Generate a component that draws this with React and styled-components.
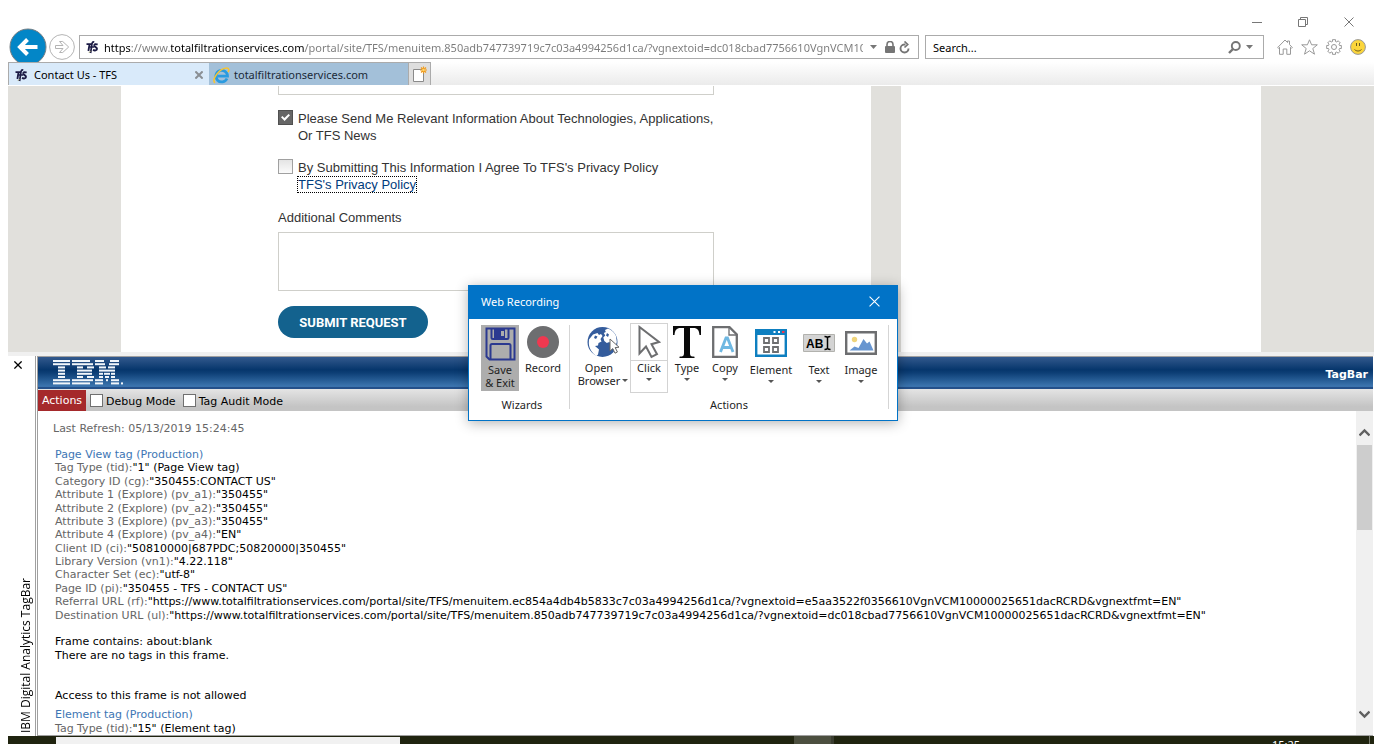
import React from "react";
import styled, { createGlobalStyle, css } from "styled-components";

const ui = '"Noto Sans", "Open Sans", sans-serif';
const verdana = '"DejaVu Sans", sans-serif';
const pageFont = '"Liberation Sans", Arial, sans-serif';

const Global = createGlobalStyle`
  *, *::before, *::after { box-sizing: border-box; }
  body { margin: 0; background: #fff; color: #000; font: 11px/16px ${ui}; }
  button, input, textarea { font: inherit; color: inherit; margin: 0; }
  svg { display: block; flex: none; }
`;

const Screen = styled.div`
  position: relative;
  display: flex;
  flex-direction: column;
  height: 100vh;
  overflow: hidden;
`;

const bareButton = css`
  display: flex;
  align-items: center;
  justify-content: center;
  padding: 0;
  border: 0;
  background: none;
`;

/* ---------- browser chrome ---------- */

const WindowControls = styled.div`
  display: flex;
  justify-content: flex-end;
  gap: 24px;
  height: 35px;
  padding: 12px 22px 0 0;
`;

const ControlButton = styled.button`
  ${bareButton}
  width: 22px;
  height: 20px;
`;

const AddressRow = styled.div`
  display: flex;
  align-items: center;
  height: 24px;
  padding: 0 16px 0 8px;
`;

const BackButton = styled.button`
  ${bareButton}
  width: 40px;
  height: 24px;
  overflow: visible;
`;

const ForwardButton = styled.button`
  ${bareButton}
  width: 28px;
  margin-right: 3px;
`;

const AddressBox = styled.div`
  display: flex;
  align-items: center;
  flex: 828 1 0;
  min-width: 0;
  height: 24px;
  padding: 0 5px;
  border: 1px solid #ababab;
  background: #fff;
`;

const SearchBox = styled(AddressBox)`
  flex: 322 1 0;
  margin-left: 6px;
  padding: 0 8px 0 7px;
`;

const UrlInput = styled.input`
  flex: 1;
  min-width: 0;
  height: 20px;
  margin: 0 0 0 5px;
  padding: 0;
  border: 0;
  outline: 0;
  color: #7a7a7a;
  -webkit-text-fill-color: transparent;
  background: linear-gradient(
    90deg,
    #000 0 27px,
    #7a7a7a 27px 67px,
    #000 67px 201px,
    #7a7a7a 201px
  );
  background-clip: text;
`;

const SearchInput = styled.input`
  flex: 1;
  min-width: 0;
  height: 20px;
  padding: 0;
  border: 0;
  outline: 0;
  background: none;
  &::placeholder { color: #000; opacity: 1; }
`;

const SmallButton = styled.button`
  ${bareButton}
  width: ${(p) => p.$w || 16}px;
  height: 20px;
`;

const Toolbar = styled.div`
  display: flex;
  gap: 8px;
  margin-left: 13px;
`;

const TabStrip = styled.div`
  display: flex;
  height: 24px;
  margin: 3px 8px 0;
  padding-bottom: 1px;
  background: linear-gradient(#fff, #ebebeb) top / 100% 23px no-repeat;
`;

const Tab = styled.div`
  display: flex;
  align-items: center;
  gap: ${(p) => (p.$active ? 6 : 4)}px;
  width: ${(p) => (p.$active ? 201 : 199)}px;
  padding: 2px 5px 0 ${(p) => (p.$active ? 5 : 4)}px;
  border: solid #ababab;
  border-width: 1px 0 0 ${(p) => (p.$active ? 1 : 0)}px;
  background: ${(p) => (p.$active ? "#d9eafa" : "#a3c0d9")};
  color: ${(p) => (p.$active ? "#000" : "#1b2a38")};
`;

const TabTitle = styled.span`
  flex: 1;
  white-space: nowrap;
`;

const NewTab = styled.button`
  ${bareButton}
  width: 23px;
  border: 1px solid #ababab;
  border-bottom: 0;
  background: #dedede;
`;

/* ---------- web page ---------- */

const PageView = styled.main`
  display: flex;
  justify-content: center;
  gap: 30px;
  flex: none;
  height: 266px;
  margin: 0 8px;
  overflow: hidden;
  background: #e1e0dc;
`;

const Column = styled.section`
  width: ${(p) => p.$w}px;
  background: #fff;
`;

const Form = styled.form`
  display: flex;
  flex-direction: column;
  align-items: flex-start;
  width: 436px;
  margin-left: 157px;
  color: #333;
  font: 13px/17px ${pageFont};
`;

const TextField = styled.input`
  width: 100%;
  height: 9px;
  padding: 0;
  border: 1px solid #cfcfca;
  border-top: 0;
  background: #fff;
`;

const CheckRow = styled.div`
  display: flex;
  gap: 5px;
  margin-top: 15px;
`;

const FormCheck = styled.input`
  appearance: none;
  flex: none;
  width: 15px;
  height: 15px;
  border: 1px solid #a0a0a0;
  background: linear-gradient(#e4e4e4, #fbfbfb);
  &:checked {
    border-color: #505050;
    background: #666;
  }
  &:checked::after {
    content: "";
    display: block;
    width: 9px;
    height: 7px;
    margin: 3px 2px;
    background: #fff;
    clip-path: polygon(0 45%, 16% 28%, 38% 58%, 84% 0, 100% 18%, 40% 100%);
  }
`;

const CheckText = styled.div`
  display: flex;
  flex-direction: column;
  align-items: flex-start;
`;

const PolicyLink = styled.a`
  margin-left: -1px;
  padding: 0 1px;
  color: #003b7c;
  text-decoration: none;
  outline: 1px dotted #000;
  outline-offset: -1px;
`;

const FieldLabel = styled.label`
  margin-top: 16px;
`;

const Comments = styled.textarea`
  width: 100%;
  height: 59px;
  margin-top: 6px;
  border: 1px solid #cfcfca;
  resize: none;
`;

const Submit = styled.button`
  height: 32px;
  width: 150px;
  margin-top: 15px;
  border: 0;
  border-radius: 16px;
  background: #13628e;
  color: #fff;
  font: 700 13px/32px Roboto, sans-serif;
`;

/* ---------- tag bar ---------- */

const TagBar = styled.section`
  display: flex;
  flex: 1;
  min-height: 0;
  margin: 0 8px;
  border-top: 4px solid #f0f0f0;
`;

const SideRail = styled.aside`
  display: flex;
  flex-direction: column;
  align-items: center;
  justify-content: space-between;
  width: 28px;
  padding: 4px 0 3px;
  border-right: 1px solid #a0a0a0;
`;

const RailClose = styled.button`
  ${bareButton}
  align-self: flex-start;
  width: 20px;
  height: 10px;
`;

const RailTitle = styled.h2`
  margin: 0 -8px 0 0;
  font: 12px/14px "Open Sans", sans-serif;
  white-space: nowrap;
  writing-mode: vertical-rl;
  transform: rotate(180deg);
`;

const TagMain = styled.div`
  display: flex;
  flex: 1;
  flex-direction: column;
  min-width: 0;
  margin: 0 1px;
  border: solid #a0a0a0;
  border-width: 1px 0 1px 1px;
`;

const TagHeader = styled.header`
  display: flex;
  justify-content: space-between;
  flex: none;
  height: 32px;
  padding: 3px 5px 0 15px;
  background: linear-gradient(#33598d, #06366c 40%, #0d3f76 50%, #3d76b0 92%, #24508a 94%);
  color: #fff;
  font: 700 11px/29px ${verdana};
`;

const TagTools = styled.div`
  display: flex;
  align-items: center;
  flex: none;
  height: 22px;
  background: linear-gradient(#e4e4e4, #c4c4c4 80%);
  font: 11px/14px ${verdana};
`;

const ActionsButton = styled.button`
  align-self: stretch;
  width: 48px;
  margin-top: 1px;
  padding: 0;
  border: 0;
  background: #a5292b;
  color: #fff;
`;

const ToolCheck = styled.label`
  display: flex;
  align-items: center;
  gap: 3px;
  margin: 4px 0 0 4px;
  & + & { margin-left: 7px; }
  input {
    appearance: none;
    width: 13px;
    height: 13px;
    margin-bottom: 3px;
    border: 1px solid #707070;
    background: #fff;
  }
`;

const LogArea = styled.div`
  display: flex;
  flex: 1;
  min-height: 0;
`;

const Log = styled.div`
  flex: 1;
  min-width: 0;
  padding: 11px 0 0 17px;
  overflow: hidden;
  font: 11px/13px ${verdana};
  white-space: nowrap;
`;

const Refresh = styled.p`
  margin: 0 0 13px -2px;
  color: #666;
`;

const TagLink = styled.a`
  color: #3d76b4;
  text-decoration: none;
`;

const TagList = styled.div`
  display: grid;
  grid-auto-rows: 1fr;
  min-height: ${(p) => p.$h}px;
  margin-bottom: ${(p) => p.$after || 0}px;
`;

const Name = styled.span`
  color: #666;
`;

const ScrollTrack = styled.div`
  display: flex;
  flex-direction: column;
  justify-content: space-between;
  flex: none;
  width: 17px;
  padding: 11px 0;
  background: #f0f0f0;
`;

const Thumb = styled.div`
  height: 85px;
  margin: 3px 1px auto;
  background: #cdcdcd;
`;

const Taskbar = styled.footer`
  display: flex;
  flex: none;
  height: 8px;
  margin: 0 8px;
  overflow: hidden;
  background: #20240f;
`;

const TaskSearch = styled.div`
  width: 344px;
  margin: 1px 0 0 48px;
  background: #f1f1f1;
`;

const TaskItem = styled.div`
  width: 40px;
  margin-left: 394px;
  border-right: 3px solid #3a3d30;
  background: #4c4f3f;
`;

const Clock = styled.time`
  margin-left: auto;
  padding: 2px 69px 0 0;
  border-right: 1px solid #777a6c;
  margin-right: 4px;
  color: #fff;
  font: 11px/14px ${ui};
`;

/* ---------- recorder window ---------- */

const Recorder = styled.div`
  position: absolute;
  top: 285px;
  left: calc(50% - 223px);
  width: 430px;
  border: 1px solid #0173c7;
  background: #fff;
  box-shadow: 0 2px 12px rgba(0, 0, 0, 0.3);
  color: #1e1e1e;
  font: 11px/13px ${ui};
`;

const RecorderTitle = styled.header`
  display: flex;
  align-items: center;
  justify-content: space-between;
  height: 33px;
  padding: 0 17px 2px 12px;
  background: #0173c7;
  color: #fff;
`;

const Ribbon = styled.div`
  display: flex;
  padding: 4px 0 9px 12px;
`;

const Group = styled.div`
  display: flex;
  flex: none;
  flex-direction: column;
  align-items: center;
  gap: 5px;
`;

const GroupTools = styled.div`
  display: flex;
  height: 70px;
`;

const Divider = styled.div`
  flex: none;
  width: 1px;
  margin: 2px 6px 2px 6px;
  background: #d5d5d5;
`;

const Tool = styled.button`
  display: flex;
  flex: none;
  flex-direction: column;
  align-items: center;
  width: ${(p) => p.$w}px;
  padding: 0;
  border: 0;
  background: none;
  ${(p) => p.$pressed && css`
    height: 66px;
    margin: 2px 4px 0 0;
    background: #adadad;
  `}
  ${(p) => p.$framed && css`
    outline: 1px solid #d3d3d3;
    outline-offset: -1px;
    background: linear-gradient(#d3d3d3, #d3d3d3) 0 37px / 100% 1px no-repeat;
  `}
`;

const IconSlot = styled.span`
  display: flex;
  align-items: center;
  justify-content: center;
  height: ${(p) => p.$h}px;
`;

const ToolLabel = styled.span`
  display: flex;
  align-items: flex-end;
  white-space: pre-line;
`;

const Caret = styled.span`
  width: 0;
  margin: ${(p) => (p.$inline ? "0 0 5px 2px" : "4px 0 0")};
  border: solid transparent;
  border-width: 3px 3px 0;
  border-top-color: #555;
`;

/* ---------- icons ---------- */

const CrossIcon = ({ size = 10, color = "#666", w = 1 }) => (
  <svg width={size} height={size} viewBox="0 0 10 10" stroke={color} strokeWidth={w} aria-hidden="true">
    <path d="M0.5 0.5l9 9M9.5 0.5l-9 9" />
  </svg>
);

const TfsIcon = () => (
  <svg width="14" height="14" viewBox="0 0 14 14" fill="none" stroke="#1c1b45" aria-hidden="true">
    <path d="M1.500 4.200h5.500M4.600 4L3.400 11" strokeWidth="1.800" />
    <path d="M9.200 2.200C7.600 1.300 7 3 6.800 5L5.600 13M5 7h4" strokeWidth="1.700" />
    <path d="M12.600 4.600c-1.800-1-3.600-.3-3.300 1.200.3 1.300 2.900 1.500 2.700 3.200-.2 1.600-2.300 1.800-4 .9" strokeWidth="1.900" />
    <path d="M4 12.800l2-2" stroke="#8a8a5a" />
  </svg>
);

const BackIcon = () => (
  <svg width="38" height="38" viewBox="0 0 38 38" aria-hidden="true">
    <circle cx="19" cy="19" r="18" fill="#0386c7" stroke="#767d82" />
    <path d="M28.500 19H12M18.500 11.500L11 19l7.500 7.500" fill="none" stroke="#fff" strokeWidth="4" />
  </svg>
);

const ForwardIcon = () => (
  <svg width="26" height="26" viewBox="0 0 26 26" fill="none" stroke="#b4b4b4" aria-hidden="true">
    <circle cx="13" cy="13" r="12.400" fill="#fff" />
    <path d="M6.500 11.500h7.500l-3.500-4h3.200l6 5.500-6 5.500h-3.200l3.500-4h-7.500z" />
  </svg>
);

const EdgeIcon = () => (
  <svg width="17" height="17" viewBox="0 0 17 17" fill="none" aria-hidden="true">
    <path d="M14 11.500A5.800 5.800 0 1 1 14.500 9.200H4.500" stroke="#2a9be0" strokeWidth="2.800" />
    <path d="M2 15.800C-1.500 13 5.500 1.800 13.500 1c3-.1 2.600 2.500 1.500 4" stroke="#f6c433" strokeWidth="1.600" />
  </svg>
);

const DropIcon = () => (
  <svg width="7" height="4" viewBox="0 0 7 4" fill="#777" aria-hidden="true"><path d="M0 0h7L3.500 4z" /></svg>
);

const LockIcon = () => (
  <svg width="10" height="12" viewBox="0 0 10 12" aria-hidden="true">
    <path d="M2 6V3.500a3 3 0 0 1 6 0V6" fill="none" stroke="#757575" strokeWidth="1.600" />
    <rect y="5" width="10" height="7" rx="1" fill="#757575" />
  </svg>
);

const ReloadIcon = () => (
  <svg width="12" height="13" viewBox="0 0 12 13" fill="none" stroke="#757575" aria-hidden="true">
    <path d="M6.500 3.500H5.300a4 4 0 1 0 4.200 4" strokeWidth="1.900" />
    <path d="M5.500.5l3.200 3-3.200 3" strokeWidth="1.700" />
  </svg>
);

const SearchIcon = () => (
  <svg width="13" height="13" viewBox="0 0 13 13" fill="none" stroke="#757575" aria-hidden="true">
    <circle cx="7.800" cy="5" r="4" strokeWidth="1.900" />
    <path d="M5 8L1 12" strokeWidth="2.400" />
  </svg>
);

const HomeIcon = () => (
  <svg width="16" height="16" viewBox="0 0 16 16" fill="none" stroke="#999" aria-hidden="true">
    <path d="M.7 8.500L8 1l2.500 2.500V2h2v3.500L15.300 8.500l-.8.8-1-1v7H9.800V10H6.200v5.300H2.500v-7l-1 1z" />
  </svg>
);

const StarIcon = () => (
  <svg width="17" height="16" viewBox="0 0 17 16" fill="none" stroke="#999" aria-hidden="true">
    <path d="M8.500.8l2.100 5h5.700l-4.500 3.700 1.700 5.700-5-3.400-5 3.400 1.700-5.700L.7 5.800h5.700z" />
  </svg>
);

const GearIcon = () => {
  const teeth = Array.from({ length: 8 }, (_, i) => {
    const at = (r, off) => {
      const a = ((i * 45 + off) * Math.PI) / 180;
      return `${(8 + r * Math.cos(a)).toFixed(2)} ${(8 + r * Math.sin(a)).toFixed(2)}`;
    };
    return `${at(5.7, -15)} L${at(7.5, -12)} L${at(7.5, 12)} L${at(5.7, 15)}`;
  });
  return (
    <svg width="16" height="16" viewBox="0 0 16 16" fill="none" stroke="#999" aria-hidden="true">
      <path d={`M${teeth.join(" L")}z`} />
      <circle cx="8" cy="8" r="2.500" />
    </svg>
  );
};

const SmileIcon = () => (
  <svg width="16" height="16" viewBox="0 0 16 16" aria-hidden="true">
    <circle cx="8" cy="8" r="7.400" fill="#fbd53b" stroke="#999" />
    <path d="M6.500 4v3M9.500 4v3M4.500 10.500c2 2 5 2 7 0" fill="none" stroke="#6d5c1c" />
  </svg>
);

const NewTabIcon = () => (
  <svg width="14" height="17" viewBox="0 0 14 17" aria-hidden="true">
    <path d="M.5 3.500h10v12H.5z" fill="#fff" stroke="#8a8a8a" />
    <path d="M10.500.5v7M7 4h7M8 1.500l5 5M13 1.500l-5 5" stroke="#f09a1c" strokeWidth="1.200" />
    <circle cx="10.500" cy="4" r="1.300" fill="#ffd76b" />
  </svg>
);

const IBM_BARS = [
  [[0, 17], [19, 37], [42, 51], [57, 66]],
  [[0, 17], [19, 40], [42, 52], [56, 66]],
  [[5, 12], [24, 30], [34, 41], [46, 53], [55, 62]],
  [[5, 12], [24, 39], [46, 62]],
  [[5, 12], [24, 39], [46, 50], [51, 57], [58, 62]],
  [[5, 12], [24, 30], [34, 41], [46, 50], [52, 56], [58, 62]],
  [[0, 17], [19, 40], [42, 50], [53, 55], [58, 66]],
  [[0, 17], [19, 37], [42, 50], [58, 66], [68, 70]],
];

const IbmLogo = () => (
  <svg width="70" height="25" viewBox="0 0 70 25" fill="#f2f6fa" role="img" aria-label="IBM">
    {IBM_BARS.map((row, y) =>
      row.map(([a, b]) => (
        <rect key={`${y}-${a}`} x={a} y={y * 3.2} width={b - a} height="2" />
      ))
    )}
  </svg>
);

const Chevron = ({ up }) => (
  <svg width="11" height="9" viewBox="0 0 11 9" fill="none" stroke="#606060" strokeWidth="2.400" aria-hidden="true">
    <path d={up ? "M0.500 7.500l5-5 5 5" : "M0.500 1.500l5 5 5-5"} />
  </svg>
);

const SaveIcon = () => (
  <svg width="31" height="34" viewBox="0 0 31 34" fill="none" stroke="#2b3990" strokeWidth="2" aria-hidden="true">
    <path d="M1.500 1.500h28v31h-25l-3-3z" />
    <path d="M6.500 2v8.500q0 1.500 1.500 1.500h14q1.500 0 1.500-1.500V2M5.500 32V18.500q0-1.500 1.500-1.500h17q1.500 0 1.500 1.500V32" />
    <path d="M9 2h11v9H9z" fill="#2b3990" stroke="none" />
    <path d="M16 4h3v5h-3z" fill="#adadad" stroke="none" />
  </svg>
);

const RecordIcon = () => (
  <svg width="32" height="32" viewBox="0 0 32 32" aria-hidden="true">
    <circle cx="16" cy="16" r="16" fill="#6d6e70" />
    <circle cx="16" cy="16" r="6" fill="#ef3850" />
  </svg>
);

const GlobeIcon = () => (
  <svg width="33" height="32" viewBox="0 0 33 32" aria-hidden="true">
    <circle cx="15.500" cy="16" r="15" fill="#345c9c" />
    <path d="M2 13.500l4-5 4.500-1.500 1.500 2 2-1 1.500 2-2 3 1 2.500-3 1.500-.5 2.500-3 .5 4 3.500-1 5-1.500 1.500C5.500 27.500 2 23 1.800 17z" fill="#fff" />
    <path d="M18 4l3-1.500c3.500 1.500 6.500 4 8 7.500l.8 6-2 6-5.500-6-2.500 1-2.500-2-1-3.500 2-2-1.500-2.500 2-1z" fill="#fff" />
    <path d="M8 9.500l2.500 1-1.500 2.500-2-1zM20 7l2 1.500-1 2.500-2-1.500z" fill="#345c9c" />
    <path d="M23 13v12l2.800-2.400 2.200 4.600 2.400-1.200-2.200-4.400 3.800-.4z" fill="#fff" stroke="#666" />
  </svg>
);

const PointerIcon = () => (
  <svg width="24" height="34" viewBox="0 0 24 34" fill="#fff" stroke="#6d6e70" strokeWidth="2" aria-hidden="true">
    <path d="M2.500 2v26.500l6.500-7 5.500 10.500 5.500-2.800-5.500-10L22 17z" />
  </svg>
);

const TypeIcon = () => (
  <svg width="28" height="32" viewBox="0 0 28 32" fill="#0a0a0a" aria-hidden="true">
    <path d="M0 0h28v9h-1.500C26 4 24.500 2 20.500 2H17v25c0 3 1 3.500 4.500 3.700V32h-15v-1.300C10 30.500 11 30 11 27V2H7.500C3.500 2 2 4 1.500 9H0z" />
  </svg>
);

const CopyIcon = () => (
  <svg width="26" height="32" viewBox="0 0 26 32" fill="none" aria-hidden="true">
    <path d="M1.200 1.200h16.300l7.300 7.300v22.300H1.200z" stroke="#6d6e70" strokeWidth="2.300" />
    <path d="M17 1.500v7.500h7.500" stroke="#6d6e70" strokeWidth="1.300" />
    <path d="M8.500 26l5.500-14h1.500L21 26M10.500 21.500h8.500" stroke="#6fb8e2" strokeWidth="2.800" />
  </svg>
);

const ElementIcon = () => (
  <svg width="32" height="28" viewBox="0 0 32 28" fill="none" aria-hidden="true">
    <path d="M1.200 1.200h29.600v25.600H1.200z" fill="#fff" stroke="#0e7fc0" strokeWidth="2.400" />
    <path d="M0 0h32v6H0z" fill="#0e7fc0" />
    <path d="M18.500 3h2M23 3h2" stroke="#fff" strokeWidth="2" />
    <path d="M27 3h2.500" stroke="#ef3850" strokeWidth="2" />
    <path d="M9 9h5v5H9zM18 9h5v5h-5zM9 18h5v5H9zM18 18h5v5h-5z" stroke="#6d6e70" strokeWidth="1.800" />
  </svg>
);

const TextIcon = () => (
  <svg width="32" height="18" viewBox="0 0 32 18" aria-hidden="true">
    <path d="M.5.500h31v17H.5z" fill="#d4d4d4" stroke="#b2b2ae" />
    <text x="3" y="14" fontFamily="Liberation Sans, sans-serif" fontWeight="700" fontSize="12">AB</text>
    <path d="M21.500 2.500q2 0 3 1 1-1 3-1M21.500 15.500q2 0 3-1 1 1 3 1M24.500 3.500v11" fill="none" stroke="#000" strokeWidth="1.500" />
  </svg>
);

const ImageIcon = () => (
  <svg width="32" height="24" viewBox="0 0 32 24" aria-hidden="true">
    <path d="M1.200 1.200h29.600v21.600H1.200z" fill="#fff" stroke="#6d6e70" strokeWidth="2.400" />
    <circle cx="9.500" cy="8.500" r="2.700" fill="#efd47c" />
    <path d="M4.500 19.500l5-4 4 1.500L18.500 8l3.500 4.500 2.500-2 4 9z" fill="#6795d0" />
  </svg>
);

/* ---------- data ---------- */

const HOST = "https://www.totalfiltrationservices.com/portal/site/TFS/menuitem.";
const OID = "VgnVCM10000025651dacRCRD&vgnextfmt=EN";
const CONTACT_URL = `${HOST}850adb747739719c7c03a4994256d1ca/?vgnextoid=dc018cbad7756610${OID}`;
const REFERRAL_URL = `${HOST}ec854a4db4b5833c7c03a4994256d1ca/?vgnextoid=e5aa3522f0356610${OID}`;

const PAGE_VIEW = [
  ["Tag Type (tid):", '"1" (Page View tag)'],
  ["Category ID (cg):", '"350455:CONTACT US"'],
  ["Attribute 1 (Explore) (pv_a1):", '"350455"'],
  ["Attribute 2 (Explore) (pv_a2):", '"350455"'],
  ["Attribute 3 (Explore) (pv_a3):", '"350455"'],
  ["Attribute 4 (Explore) (pv_a4):", '"EN"'],
  ["Client ID (ci):", '"50810000|687PDC;50820000|350455"'],
  ["Library Version (vn1):", '"4.22.118"'],
  ["Character Set (ec):", '"utf-8"'],
  ["Page ID (pi):", '"350455 - TFS - CONTACT US"'],
  ["Referral URL (rf):", `"${REFERRAL_URL}"`],
  ["Destination URL (ul):", `"${CONTACT_URL}"`],
];

const ACTIONS = [
  { label: "Open\nBrowser", icon: <GlobeIcon />, w: 54, slot: 38, inline: true },
  { label: "Click", icon: <PointerIcon />, w: 38, slot: 38, framed: true },
  { label: "Type", icon: <TypeIcon />, w: 38, slot: 38 },
  { label: "Copy", icon: <CopyIcon />, w: 38, slot: 38 },
  { label: "Element", icon: <ElementIcon />, w: 54, slot: 40 },
  { label: "Text", icon: <TextIcon />, w: 42, slot: 40 },
  { label: "Image", icon: <ImageIcon />, w: 42, slot: 40 },
];

export default function App() {
  return (
    <Screen>
      <Global />
      <WindowControls>
        <ControlButton aria-label="Minimize">
          <svg width="10" height="1" viewBox="0 0 10 1" fill="#777"><path d="M0 0h10v1H0z" /></svg>
        </ControlButton>
        <ControlButton aria-label="Restore">
          <svg width="10" height="10" viewBox="0 0 10 10" fill="none" stroke="#777"><path d="M.5 2.500h7v7h-7zM2.500 2.500v-2h7v7h-2" /></svg>
        </ControlButton>
        <ControlButton aria-label="Close"><CrossIcon color="#777" /></ControlButton>
      </WindowControls>

      <AddressRow>
        <BackButton aria-label="Back"><BackIcon /></BackButton>
        <ForwardButton aria-label="Forward"><ForwardIcon /></ForwardButton>
        <AddressBox>
          <TfsIcon />
          <UrlInput aria-label="Address" defaultValue={CONTACT_URL} />
          <SmallButton $w={20} aria-label="Show addresses"><DropIcon /></SmallButton>
          <SmallButton $w={14} aria-label="Security report"><LockIcon /></SmallButton>
          <SmallButton $w={16} aria-label="Refresh"><ReloadIcon /></SmallButton>
        </AddressBox>
        <SearchBox>
          <SearchInput aria-label="Search" placeholder="Search..." />
          <SmallButton $w={18} aria-label="Search"><SearchIcon /></SmallButton>
          <SmallButton $w={12} aria-label="Search options"><DropIcon /></SmallButton>
        </SearchBox>
        <Toolbar>
          <SmallButton aria-label="Home"><HomeIcon /></SmallButton>
          <SmallButton $w={17} aria-label="Favorites"><StarIcon /></SmallButton>
          <SmallButton aria-label="Tools"><GearIcon /></SmallButton>
          <SmallButton aria-label="Feedback"><SmileIcon /></SmallButton>
        </Toolbar>
      </AddressRow>

      <TabStrip>
        <Tab $active>
          <TfsIcon />
          <TabTitle>Contact Us - TFS</TabTitle>
          <SmallButton $w={10} aria-label="Close tab"><CrossIcon size={8} color="#8a8f94" w={2.5} /></SmallButton>
        </Tab>
        <Tab>
          <EdgeIcon />
          <TabTitle>totalfiltrationservices.com</TabTitle>
        </Tab>
        <NewTab aria-label="New tab"><NewTabIcon /></NewTab>
      </TabStrip>

      <PageView>
        <Column $w={750}>
          <Form onSubmit={(e) => e.preventDefault()}>
            <TextField aria-label="Phone" />
            <CheckRow>
              <FormCheck type="checkbox" id="news" defaultChecked />
              <label htmlFor="news">
                Please Send Me Relevant Information About Technologies, Applications,
                <br />
                Or TFS News
              </label>
            </CheckRow>
            <CheckRow>
              <FormCheck type="checkbox" id="agree" />
              <CheckText>
                <label htmlFor="agree">By Submitting This Information I Agree To TFS's Privacy Policy</label>
                <PolicyLink href="#privacy">TFS's Privacy Policy</PolicyLink>
              </CheckText>
            </CheckRow>
            <FieldLabel htmlFor="comments">Additional Comments</FieldLabel>
            <Comments id="comments" />
            <Submit>SUBMIT REQUEST</Submit>
          </Form>
        </Column>
        <Column $w={360} />
      </PageView>

      <TagBar>
        <SideRail>
          <RailClose aria-label="Close tag bar"><CrossIcon size={8} color="#000" w={1.6} /></RailClose>
          <RailTitle>IBM Digital Analytics TagBar</RailTitle>
        </SideRail>
        <TagMain>
          <TagHeader>
            <IbmLogo />
            TagBar
          </TagHeader>
          <TagTools>
            <ActionsButton>Actions</ActionsButton>
            <ToolCheck><input type="checkbox" />Debug Mode</ToolCheck>
            <ToolCheck><input type="checkbox" />Tag Audit Mode</ToolCheck>
          </TagTools>
          <LogArea>
            <Log>
              <Refresh>Last Refresh: 05/13/2019 15:24:45</Refresh>
              <TagList $h={174} $after={13}>
                <TagLink href="#page-view">Page View tag (Production)</TagLink>
                {PAGE_VIEW.map(([name, value]) => (
                  <div key={name}><Name>{name}</Name>{value}</div>
                ))}
              </TagList>
              <TagList $h={27} $after={27}>
                <div>Frame contains: about:blank</div>
                <div>There are no tags in this frame.</div>
              </TagList>
              <TagList $h={13} $after={6}>
                <div>Access to this frame is not allowed</div>
              </TagList>
              <TagList $h={27}>
                <TagLink href="#element">Element tag (Production)</TagLink>
                <div><Name>Tag Type (tid):</Name>"15" (Element tag)</div>
              </TagList>
            </Log>
            <ScrollTrack>
              <SmallButton $w={17} aria-label="Scroll up"><Chevron up /></SmallButton>
              <Thumb />
              <SmallButton $w={17} aria-label="Scroll down"><Chevron /></SmallButton>
            </ScrollTrack>
          </LogArea>
        </TagMain>
      </TagBar>

      <Taskbar>
        <TaskSearch />
        <TaskItem />
        <Clock>15:25</Clock>
      </Taskbar>

      <Recorder role="dialog" aria-label="Web Recording">
        <RecorderTitle>
          Web Recording
          <SmallButton $w={12} aria-label="Close"><CrossIcon size={11} color="#fff" /></SmallButton>
        </RecorderTitle>
        <Ribbon>
          <Group>
            <GroupTools>
              <Tool $w={38} $pressed>
                <IconSlot $h={38}><SaveIcon /></IconSlot>
                <ToolLabel>{"Save\n& Exit"}</ToolLabel>
              </Tool>
              <Tool $w={40}>
                <IconSlot $h={38}><RecordIcon /></IconSlot>
                <ToolLabel>Record</ToolLabel>
              </Tool>
            </GroupTools>
            <span>Wizards</span>
          </Group>
          <Divider />
          <Group>
            <GroupTools>
              {ACTIONS.map((a) => (
                <Tool key={a.label} $w={a.w} $framed={a.framed}>
                  <IconSlot $h={a.slot}>{a.icon}</IconSlot>
                  <ToolLabel>{a.label}{a.inline && <Caret $inline />}</ToolLabel>
                  {!a.inline && <Caret />}
                </Tool>
              ))}
            </GroupTools>
            <span>Actions</span>
          </Group>
          <Divider />
        </Ribbon>
      </Recorder>
    </Screen>
  );
}
